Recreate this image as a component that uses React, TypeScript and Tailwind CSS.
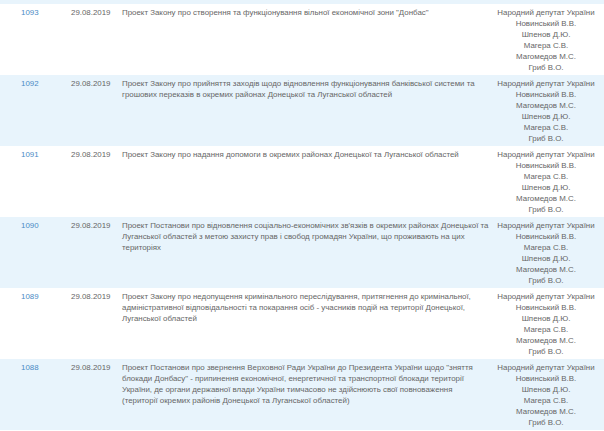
import React from 'react';

interface Bill {
    num: string;
    date: string;
    title: string[];
    authors: string[];
}

const bills: Bill[] = [
    {
        num: '1093',
        date: '29.08.2019',
        title: ['Проект Закону про створення та функціонування вільної економічної зони "Донбас"'],
        authors: ['Новинський В.В.', 'Шпенов Д.Ю.', 'Магера С.В.', 'Магомедов М.С.', 'Гриб В.О.'],
    },
    {
        num: '1092',
        date: '29.08.2019',
        title: [
            'Проект Закону про прийняття заходів щодо відновлення функціонування банківської системи та',
            'грошових переказів в окремих районах Донецької та Луганської областей',
        ],
        authors: ['Новинський В.В.', 'Магомедов М.С.', 'Шпенов Д.Ю.', 'Магера С.В.', 'Гриб В.О.'],
    },
    {
        num: '1091',
        date: '29.08.2019',
        title: ['Проект Закону про надання допомоги в окремих районах Донецької та Луганської областей'],
        authors: ['Новинський В.В.', 'Магера С.В.', 'Шпенов Д.Ю.', 'Магомедов М.С.', 'Гриб В.О.'],
    },
    {
        num: '1090',
        date: '29.08.2019',
        title: [
            "Проект Постанови про відновлення соціально-економічних зв'язків в окремих районах Донецької та",
            'Луганської областей з метою захисту прав і свобод громадян України, що проживають на цих',
            'територіях',
        ],
        authors: ['Новинський В.В.', 'Магера С.В.', 'Шпенов Д.Ю.', 'Магомедов М.С.', 'Гриб В.О.'],
    },
    {
        num: '1089',
        date: '29.08.2019',
        title: [
            'Проект Закону про недопущення кримінального переслідування, притягнення до кримінальної,',
            'адміністративної відповідальності та покарання осіб - учасників подій на території Донецької,',
            'Луганської областей',
        ],
        authors: ['Новинський В.В.', 'Шпенов Д.Ю.', 'Магера С.В.', 'Магомедов М.С.', 'Гриб В.О.'],
    },
    {
        num: '1088',
        date: '29.08.2019',
        title: [
            'Проект Постанови про звернення Верховної Ради України до Президента України щодо "зняття',
            'блокади Донбасу" - припинення економічної, енергетичної та транспортної блокади території',
            'України, де органи державної влади України тимчасово не здійснюють свої повноваження',
            '(території окремих районів Донецької та Луганської областей)',
        ],
        authors: ['Новинський В.В.', 'Шпенов Д.Ю.', 'Магера С.В.', 'Магомедов М.С.', 'Гриб В.О.'],
    },
];

const Row: React.FC<{ bill: Bill; shaded: boolean }> = ({ bill, shaded }) => (
    <div
        className={`grid grid-cols-[71px_51px_366px_1fr] pt-[3px] pb-[2px] ${shaded ? 'bg-[#e8f4fc]' : 'bg-white'}`}
    >
        <div className="pl-[21px]">
            <a className="text-[#4b8bc5]">{bill.num}</a>
        </div>
        <div>{bill.date}</div>
        <div className="whitespace-nowrap">
            {bill.title.map((line, i) => (
                <div key={i}>{line}</div>
            ))}
        </div>
        <div className="text-center whitespace-nowrap">
            <div>Народний депутат України</div>
            {bill.authors.map((a, i) => (
                <div key={i}>{a}</div>
            ))}
        </div>
    </div>
);

export default function App() {
    return (
        <div className="w-[604px] h-[431px] overflow-hidden bg-white font-['Liberation_Sans',Arial,sans-serif] text-[7.9px] leading-[11px] text-[#666666]">
            {/* tail of the previous row */}
            <div className="h-[4px] bg-[#e8f4fc]" />
            {bills.map((b, i) => (
                <Row key={b.num} bill={b} shaded={i % 2 === 1} />
            ))}
        </div>
    );
}
